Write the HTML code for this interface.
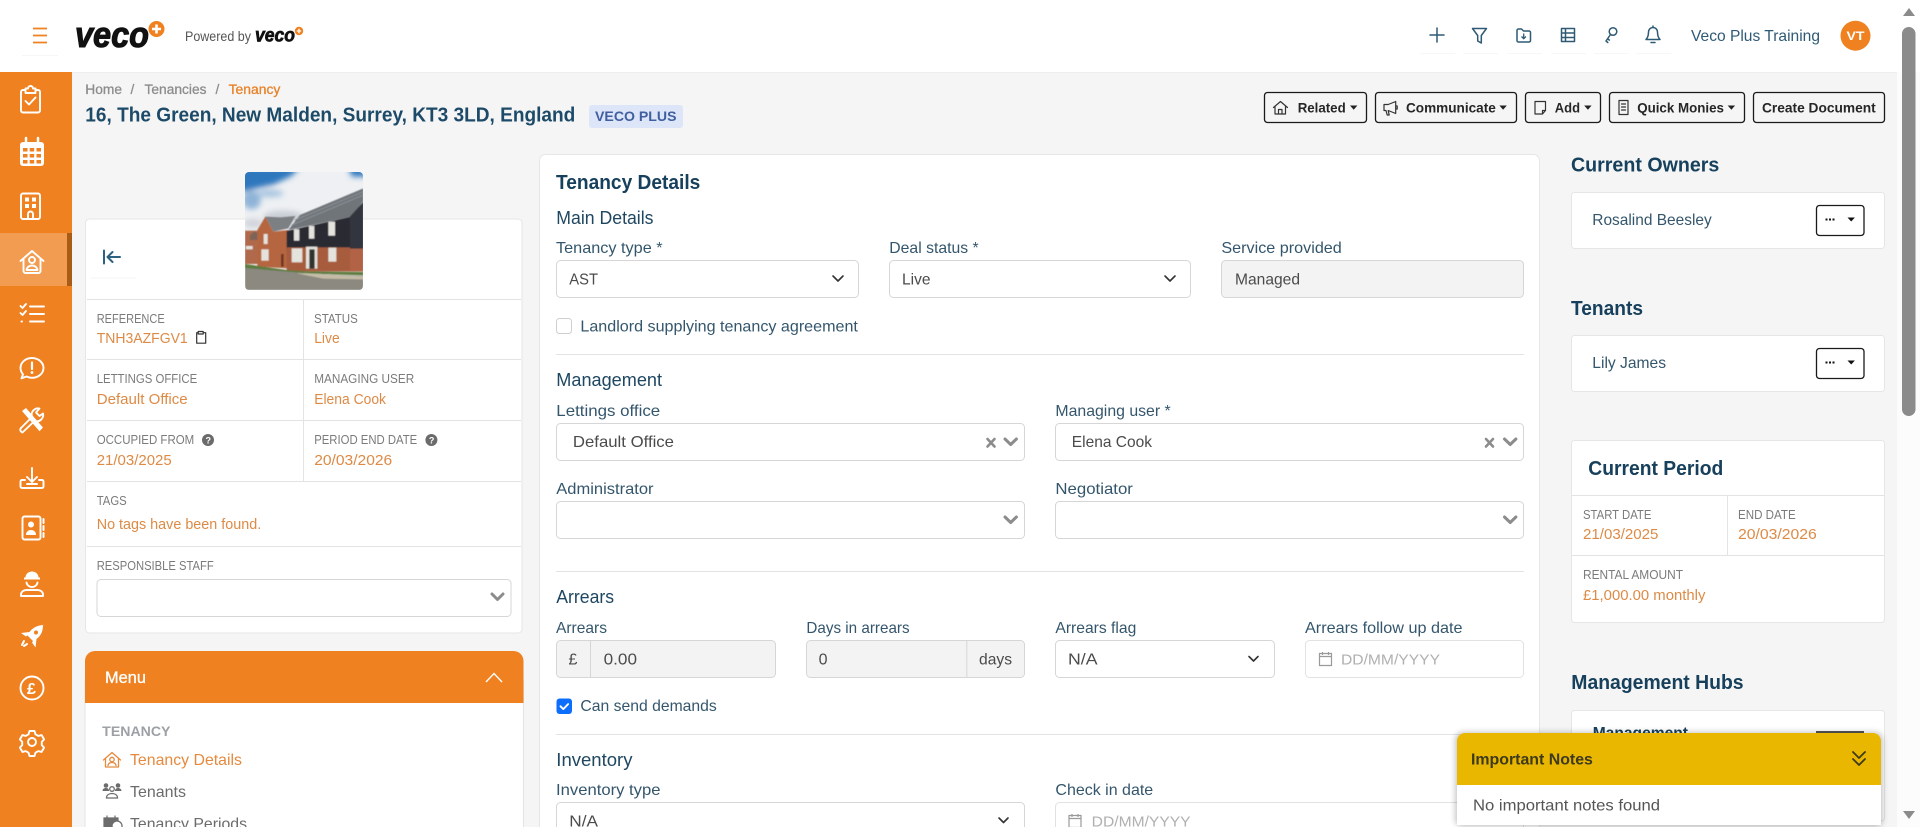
<!DOCTYPE html>
<html lang="en">
<head>
<meta charset="utf-8">
<title>Tenancy - Veco Plus</title>
<style>
html,body{margin:0;padding:0;width:1920px;height:827px;overflow:hidden;background:#fff}
svg{display:block}
text{font-family:"Liberation Sans",Arial,sans-serif}
.lb{font-size:12.5px;fill:#7b7b7b}
.v{font-size:14.5px;fill:#dd8a45}
.f{font-size:16px;fill:#34566c}
.in{font-size:16px;fill:#4b4b4b}
.ph{font-size:15px;fill:#b0b0b0}
.h2{font-size:18.5px;fill:#1f4761}
.h1{font-size:20px;font-weight:700;fill:#17405c}
.bt{font-size:14px;font-weight:700;fill:#262626}
.box{fill:#fff;stroke:#d6d6d6;stroke-width:1}
.card{fill:#fff;stroke:#e6e6e6;stroke-width:1}
.ln{stroke:#e3e3e3;stroke-width:1}
.btn{fill:none;stroke:#1a1a1a;stroke-width:1.3}
.s{fill:none;stroke:#fff;stroke-width:1.9;stroke-linecap:round;stroke-linejoin:round}
.t{fill:none;stroke:#2f5a75;stroke-width:1.5;stroke-linecap:round;stroke-linejoin:round}
.k{fill:none;stroke:#333;stroke-width:1.2;stroke-linecap:round;stroke-linejoin:round}
.ch{fill:none;stroke:#333;stroke-width:1.6;stroke-linecap:round;stroke-linejoin:round}
.cg{fill:none;stroke:#8c8c8c;stroke-width:3;stroke-linecap:round;stroke-linejoin:round}
.cx{fill:none;stroke:#8c8c8c;stroke-width:2.6;stroke-linecap:round}
</style>
</head>
<body>
<svg width="1920" height="827" viewBox="0 0 1920 827" xmlns="http://www.w3.org/2000/svg">
<defs>
<clipPath id="ph"><rect x="245" y="172" width="118" height="118" rx="4"/></clipPath>
<filter id="sh" x="-5%" y="-10%" width="110%" height="125%"><feGaussianBlur stdDeviation="3"/></filter>
<filter id="bl" x="-20%" y="-20%" width="140%" height="140%"><feGaussianBlur stdDeviation="9"/></filter>
<filter id="soft" x="-5%" y="-5%" width="110%" height="110%"><feGaussianBlur stdDeviation="1.5"/></filter>
</defs>

<!-- page backgrounds -->
<rect x="0" y="0" width="1920" height="827" fill="#fff"/>
<rect x="72" y="72" width="1825" height="755" fill="#f5f5f5"/>
<rect x="72" y="72" width="1825" height="1" fill="#eeeeee"/>
<rect x="1897" y="72" width="23" height="755" fill="#fcfcfc"/>

<!-- header -->
<rect x="22" y="55" width="36" height="1" fill="#f6f6f6"/>
<path d="M33 28.500h14M33 35.500h14M33 42.500h14" stroke="#ef8120" stroke-width="1.700" fill="none"/>
<text x="75" y="47" font-size="36" font-weight="700" font-style="italic" fill="#111" stroke="#111" stroke-width="1.100" textLength="74" lengthAdjust="spacingAndGlyphs">veco</text>
<circle cx="156.500" cy="29" r="8" fill="#ef8120"/>
<path d="M152 29h9M156.500 24.500v9" stroke="#fff" stroke-width="2.600"/>
<text x="185" y="41" font-size="13.500" fill="#555" textLength="66" lengthAdjust="spacingAndGlyphs">Powered by</text>
<text x="255" y="41.500" font-size="19" font-weight="700" font-style="italic" fill="#111" stroke="#111" stroke-width=".7" textLength="40" lengthAdjust="spacingAndGlyphs">veco</text>
<circle cx="299" cy="31" r="4.200" fill="#ef8120"/>
<path d="M296.800 31h4.400M299 28.800v4.400" stroke="#fff" stroke-width="1.300"/>

<!-- header tool icons -->
<g fill="#f7f7f7">
<rect x="1420" y="53" width="35" height="1"/><rect x="1463" y="53" width="35" height="1"/><rect x="1507" y="53" width="35" height="1"/><rect x="1551" y="53" width="35" height="1"/><rect x="1594" y="53" width="35" height="1"/><rect x="1636" y="53" width="35" height="1"/>
</g>
<path class="t" d="M1437 28v14M1430 35h14"/>
<path class="t" d="M1472.500 28.500h14l-5.200 7v7.500l-3.600-2v-5.500z"/>
<path class="t" d="M1517 30v10.500a1.500 1.500 0 0 0 1.500 1.500h10.500a1.500 1.500 0 0 0 1.500-1.500v-8a1.500 1.500 0 0 0-1.500-1.500h-5.500l-2-2h-3a1.500 1.500 0 0 0-1.500 1.500z"/>
<path d="M1523.700 33.500v5M1521.500 36.500l2.200 2.200 2.200-2.200" fill="none" stroke="#2f5a75" stroke-width="1.300"/>
<path class="t" d="M1561.500 28.500h13v13h-13zM1561.500 33h13M1561.500 37.500h13M1565.500 28.500v13"/>
<circle class="t" cx="1613" cy="31.500" r="3.800"/>
<path class="t" d="M1610.500 34.500l-4.500 6.500 1.800 1.500M1607.700 38.800l1.700 1.300"/>
<path class="t" d="M1653 27.500a4.500 4.500 0 0 1 4.500 4.500c0 4 1 6 2.500 7.500h-14c1.500-1.500 2.500-3.500 2.500-7.500a4.500 4.500 0 0 1 4.500-4.500zM1651 42.500h4M1653 26v1.500"/>
<text x="1691" y="41" font-size="16" fill="#2f5a75" textLength="129" lengthAdjust="spacingAndGlyphs">Veco Plus Training</text>
<circle cx="1855.500" cy="35.700" r="15" fill="#ef8120"/>
<text x="1846.500" y="39.800" font-size="11.500" font-weight="700" fill="#fff" textLength="18" lengthAdjust="spacingAndGlyphs">VT</text>

<!-- sidebar -->
<rect x="0" y="72" width="72" height="755" fill="#ef8120"/>
<rect x="0" y="233" width="72" height="53" fill="#f19c50"/>
<rect x="67" y="233" width="5" height="53" fill="#a85c16"/>
<!-- clipboard -->
<path class="s" d="M25.500 90h-2.500a2 2 0 0 0-2 2v18.500a2 2 0 0 0 2 2h15a2 2 0 0 0 2-2V92a2 2 0 0 0-2-2h-2.500M25.500 88.500h2.500a2.500 2.500 0 0 1 5 0h2.500v4.500h-10zM25.500 101l3.500 3.500 6.500-7"/>
<!-- calendar -->
<rect x="20" y="142" width="24" height="24" rx="3" fill="#fff"/>
<path d="M26 138v6M38 138v6" stroke="#fff" stroke-width="2.500" stroke-linecap="round"/>
<g fill="#ef8120"><rect x="23" y="148" width="4.500" height="3.500"/><rect x="29.700" y="148" width="4.500" height="3.500"/><rect x="36.500" y="148" width="4.500" height="3.500"/><rect x="23" y="154" width="4.500" height="3.500"/><rect x="29.700" y="154" width="4.500" height="3.500"/><rect x="36.500" y="154" width="4.500" height="3.500"/><rect x="23" y="160" width="4.500" height="3.500"/><rect x="29.700" y="160" width="4.500" height="3.500"/><rect x="36.500" y="160" width="4.500" height="3.500"/></g>
<!-- building -->
<rect class="s" x="21" y="193.500" width="19" height="25.500" rx="2"/>
<g fill="#fff"><rect x="25" y="197.500" width="4" height="4"/><rect x="32" y="197.500" width="4" height="4"/><rect x="25" y="204" width="4" height="4"/><rect x="32" y="204" width="4" height="4"/></g>
<path class="s" d="M28 219v-5a2.500 2.500 0 0 1 5 0v5"/>
<!-- home user -->
<path class="s" d="M20.500 261l11.500-10 11.500 10M23.500 259v12a2 2 0 0 0 2 2h13a2 2 0 0 0 2-2v-12"/>
<circle cx="32" cy="260" r="3" fill="none" stroke="#fff" stroke-width="1.900"/>
<path class="s" d="M26.500 270c.5-3 3-4.500 5.500-4.500s5 1.500 5.500 4.500z"/>
<!-- list check -->
<path class="s" d="M20.500 306l2 2 3.500-4M20.500 313l2 2 3.500-4M21.500 321.500h.5M30 306.500h14M30 314h14M30 321.500h14"/>
<!-- chat -->
<path class="s" d="M32 358c-6.500 0-11.500 4.600-11.500 10 0 2.500 1 4.500 2.500 6.300l-1.500 4 5-1.800c1.700.8 3.500 1.300 5.500 1.300 6.500 0 11.500-4.500 11.500-9.800s-5-10-11.500-10z"/>
<path d="M32 362.500v6.500" stroke="#fff" stroke-width="2.200" stroke-linecap="round"/><circle cx="32" cy="372.500" r="1.400" fill="#fff"/>
<!-- tools -->
<path d="M22 411l4-3 17 19.500-3.500 3.800z" fill="#fff"/>
<path class="s" d="M43 413.500a6.500 6.500 0 0 1-8.500 7.500l-12 11.500a3 3 0 0 1-2-4l11.500-11.500a6.500 6.500 0 0 1 7.500-8.500l-3.500 4 3.500 3.500z" stroke-width="2.100"/>
<!-- download -->
<path class="s" d="M32 468v14M27 477l5 5 5-5M25 480h-3a1.500 1.500 0 0 0-1.500 1.500v5a1.500 1.500 0 0 0 1.500 1.500h20a1.500 1.500 0 0 0 1.500-1.500v-5a1.500 1.500 0 0 0-1.500-1.500h-3M27 484h10" />
<!-- contact book -->
<rect class="s" x="22.500" y="516.500" width="18" height="23" rx="2"/>
<circle cx="31" cy="524.500" r="3" fill="#fff"/><path d="M26 535c0-3.500 2.500-5 5-5s5 1.500 5 5z" fill="#fff"/>
<path d="M43.500 519v4M43.500 526v4M43.500 533v4" stroke="#fff" stroke-width="2" stroke-linecap="round"/>
<!-- worker -->
<path d="M25.500 577.500c0-3.500 2.700-6 6.500-6s6.500 2.500 6.500 6h1.500v2h-16v-2z" fill="#fff"/>
<path class="s" d="M26.500 582.500c.5 3 3 4.500 5.500 4.500s5-1.500 5.500-4.500"/>
<path class="s" d="M21 594.500c0-3 3-4.500 5.500-4.500h11c2.500 0 5.500 1.500 5.500 4.500v1.500h-22z"/>
<!-- rocket -->
<path d="M43.500 625c-6.500.5-10.500 2.500-14 7l-8.500 1 5 3.500 1.500-1 5.500 5.500-1 1.500 3.500 5 1-8.500c4.500-3.500 6.500-7.500 6.500-14.500z" fill="#fff"/>
<circle cx="36" cy="632.500" r="2" fill="#ef8120"/>
<path d="M24 641l-2 4M27 644l-3 2" stroke="#fff" stroke-width="2" stroke-linecap="round"/>
<!-- pound -->
<circle class="s" cx="32" cy="688" r="11.500"/>
<text x="27" y="694" font-size="16" font-weight="700" fill="#fff">£</text>
<!-- gear -->
<path class="s" d="M29.500 731l5 0 1 3.300 2.800 1.600 3.300-.8 2.500 4.300-2.300 2.500v3.200l2.300 2.500-2.500 4.300-3.300-.8-2.800 1.600-1 3.300h-5l-1-3.300-2.800-1.600-3.300.8-2.500-4.300 2.300-2.500v-3.200l-2.300-2.500 2.500-4.300 3.300.8 2.800-1.600z"/>
<circle class="s" cx="32" cy="742" r="4"/>

<!-- breadcrumb and title -->
<g font-size="13.500" fill="#8d8d8d" stroke="#8d8d8d" stroke-width=".3">
<text x="85.300" y="94" textLength="36.700" lengthAdjust="spacingAndGlyphs">Home</text>
<text x="130.500" y="94">/</text>
<text x="144.500" y="94" textLength="62" lengthAdjust="spacingAndGlyphs">Tenancies</text>
<text x="215.500" y="94">/</text>
<text x="228.600" y="94" textLength="51.800" lengthAdjust="spacingAndGlyphs" fill="#e8842c" stroke="#e8842c">Tenancy</text>
</g>
<text x="85.300" y="121.500" font-size="20" font-weight="700" fill="#1c4a68" textLength="490" lengthAdjust="spacingAndGlyphs">16, The Green, New Malden, Surrey, KT3 3LD, England</text>
<rect x="589" y="105" width="94" height="23" rx="3" fill="#dde6f8"/>
<text x="595" y="121" font-size="14" font-weight="700" fill="#3f5f9f" textLength="81.500" lengthAdjust="spacingAndGlyphs">VECO PLUS</text>

<!-- action buttons -->
<rect class="btn" x="1264.500" y="92.500" width="102" height="30" rx="3"/>
<rect class="btn" x="1375.500" y="92.500" width="141" height="30" rx="3"/>
<rect class="btn" x="1525.500" y="92.500" width="75" height="30" rx="3"/>
<rect class="btn" x="1609.500" y="92.500" width="135" height="30" rx="3"/>
<rect class="btn" x="1753.500" y="92.500" width="131" height="30" rx="3"/>
<text class="bt" x="1297.700" y="112.300" textLength="48" lengthAdjust="spacingAndGlyphs">Related</text>
<text class="bt" x="1406" y="112.300" textLength="89.800" lengthAdjust="spacingAndGlyphs">Communicate</text>
<text class="bt" x="1554.800" y="112.300" textLength="25.200" lengthAdjust="spacingAndGlyphs">Add</text>
<text class="bt" x="1637.200" y="112.300" textLength="86.800" lengthAdjust="spacingAndGlyphs">Quick Monies</text>
<text class="bt" x="1762" y="112.300" textLength="113.700" lengthAdjust="spacingAndGlyphs">Create Document</text>
<g fill="#222">
<path d="M1350 105.500h7.400l-3.700 4.200z"/><path d="M1499.400 105.500h7.400l-3.700 4.200z"/><path d="M1584.200 105.500h7.400l-3.700 4.200z"/><path d="M1727.700 105.500h7.400l-3.700 4.200z"/>
</g>
<path class="k" d="M1273.500 107.500l7-6 7 6M1275 106.500v7.500h10.500v-7.500M1278.500 114v-4.500h3.500v4.500"/>
<path class="k" d="M1384 104.500v6h2l1.200 4.500h2l-1-4.500 7.500 3v-12l-7.500 3zM1395.700 106h1.500v3h-1.500"/>
<path class="k" d="M1535 101.500h10.500v9l-3 3.500h-7.500zM1545.500 110.500h-3v3.500"/>
<path class="k" d="M1619 100.500h9v14h-9zM1621.500 104h4M1621.500 107h4M1621.500 110h4"/>

<!-- left info card -->
<rect class="card" x="85.500" y="219" width="436.500" height="414" rx="4"/>
<path d="M104 250.500v13M120 257h-12M112.500 252l-5 5 5 5" fill="none" stroke="#2c6280" stroke-width="2" stroke-linecap="round" stroke-linejoin="round"/>
<path class="ln" d="M87 299.500h434M87 359.500h434M87 420.500h434M87 481.500h434M87 546.500h434M303.500 299.500v182"/>
<rect x="90" y="277.500" width="46" height="1" fill="#f5f5f5"/>
<g transform="translate(-.8,-.3)">
<text class="lb" x="97.500" y="323.300" textLength="68" lengthAdjust="spacingAndGlyphs">REFERENCE</text>
<text class="lb" x="314.800" y="323.300" textLength="43.800" lengthAdjust="spacingAndGlyphs">STATUS</text>
<text class="v" x="97.500" y="343.300" textLength="91" lengthAdjust="spacingAndGlyphs">TNH3AZFGV1</text>
<text class="v" x="315" y="343.300" textLength="25.500" lengthAdjust="spacingAndGlyphs">Live</text>
<path class="k" d="M199 333h-1.500v10.500h9v-10.500h-1.500M199 331.800h5v2.500h-5z" stroke-width="1.300"/>
<text class="lb" x="97.500" y="383.300" textLength="100.500" lengthAdjust="spacingAndGlyphs">LETTINGS OFFICE</text>
<text class="lb" x="315" y="383.300" textLength="100" lengthAdjust="spacingAndGlyphs">MANAGING USER</text>
<text class="v" x="97.500" y="404.300" textLength="91" lengthAdjust="spacingAndGlyphs">Default Office</text>
<text class="v" x="315" y="404.300" textLength="71.800" lengthAdjust="spacingAndGlyphs">Elena Cook</text>
<text class="lb" x="97.500" y="444.300" textLength="97.500" lengthAdjust="spacingAndGlyphs">OCCUPIED FROM</text>
<text class="lb" x="315" y="444.300" textLength="103" lengthAdjust="spacingAndGlyphs">PERIOD END DATE</text>
<text class="v" x="97.500" y="465.300" textLength="75" lengthAdjust="spacingAndGlyphs">21/03/2025</text>
<text class="v" x="315" y="465.300" textLength="78" lengthAdjust="spacingAndGlyphs">20/03/2026</text>
<text class="lb" x="97.500" y="505.300" textLength="30" lengthAdjust="spacingAndGlyphs">TAGS</text>
<text class="v" x="97.500" y="529.300" textLength="164.500" lengthAdjust="spacingAndGlyphs">No tags have been found.</text>
<text class="lb" x="97.500" y="570.300" textLength="117" lengthAdjust="spacingAndGlyphs">RESPONSIBLE STAFF</text>
</g>
<circle cx="208" cy="440" r="6" fill="#6b6b6b"/><text x="205.500" y="443.500" font-size="9" font-weight="700" fill="#fff">?</text>
<circle cx="431.400" cy="440" r="6" fill="#6b6b6b"/><text x="428.900" y="443.500" font-size="9" font-weight="700" fill="#fff">?</text>
<rect class="box" x="97" y="579.500" width="414" height="37" rx="4"/>
<path class="cg" d="M492 594l5.500 5.500 5.500-5.500"/>

<!-- property photo -->
<g clip-path="url(#ph)"><g transform="translate(220,160) scale(.33333)">
<rect x="60" y="20" width="385" height="385" fill="#eef0f3"/>
<g filter="url(#bl)">
<path d="M55 20h185l-25 28-55 26-45 10-60 14z" fill="#2f77bd"/>
<path d="M385 20h60v30h-50z" fill="#2f77bd"/>
<ellipse cx="95" cy="120" rx="28" ry="28" fill="#8fb4d8"/>
<ellipse cx="150" cy="100" rx="40" ry="12" fill="#a9c6e0"/>
<ellipse cx="190" cy="170" rx="60" ry="18" fill="#c9ced5"/>
<ellipse cx="100" cy="190" rx="30" ry="14" fill="#d0d4da"/>
</g>
<g filter="url(#soft)">
<rect x="75" y="212" width="40" height="100" fill="#b06a4b"/>
<path d="M90 226l14-12 10 6v20H90z" fill="#7d6458"/>
<path d="M112 320V210l24-40 24 45 45-5v115z" fill="#b5663f"/>
<path d="M136 170l45 2 45-4-21 37-45 10z" fill="#7d8083"/>
<path d="M205 210l35-45 190-80v40l-35 45z" fill="#70757a"/>
<path d="M215 195l215-90M225 180l205-85" stroke="#8a8f94" stroke-width="3" fill="none"/>
<path d="M395 170l35-45" stroke="#e8e8e8" stroke-width="3" fill="none"/>
<path d="M200 213l195-43 35-45v146H200z" fill="#2a2c33"/>
<path d="M200 262h230v72H200z" fill="#a75b3d"/>
<path d="M390 170l40-45v146h-40z" fill="#33363d"/>
<path d="M390 266h40v68h-40z" fill="#b26445"/>
<g fill="#e5e3de">
<rect x="222" y="208" width="16" height="34"/><rect x="267" y="198" width="16" height="38"/><rect x="325" y="185" width="20" height="42"/>
<rect x="215" y="265" width="32" height="42"/><rect x="325" y="263" width="24" height="42"/><rect x="124" y="268" width="22" height="34"/><rect x="131" y="222" width="12" height="30"/><rect x="258" y="260" width="34" height="66"/><rect x="78" y="258" width="20" height="10"/>
</g>
<rect x="268" y="268" width="16" height="58" fill="#30322f"/>
<rect x="183" y="282" width="8" height="38" fill="#6f3423"/>
<path d="M75 312l125 18 60 4 170 2v10l-170-6-185-14z" fill="#5f7d40"/>
<path d="M75 324l185 16 170 8v42H75z" fill="#8b8980"/>
<path d="M230 340h40l160 10v8l-120-2z" fill="#c4bca6"/>
</g>
</g></g>

<!-- menu card -->
<rect x="85" y="680" width="438.500" height="160" fill="#fff" stroke="#e4e4e4"/>
<path d="M85 703v-42a10 10 0 0 1 10-10h418.500a10 10 0 0 1 10 10v42z" fill="#ef8120"/>
<text x="105" y="683" font-size="17" fill="#fff" stroke="#fff" stroke-width=".3" textLength="41" lengthAdjust="spacingAndGlyphs">Menu</text>
<path d="M486 682l8-8.500 8 8.500" fill="none" stroke="#fff" stroke-width="1.400"/>
<text x="102.200" y="736" font-size="14" font-weight="700" fill="#9da1a6" textLength="68.300" lengthAdjust="spacingAndGlyphs">TENANCY</text>
<text x="130" y="764.800" font-size="16" fill="#e58a3f" textLength="112" lengthAdjust="spacingAndGlyphs">Tenancy Details</text>
<text x="130" y="797" font-size="16" fill="#6c6c6c" textLength="56" lengthAdjust="spacingAndGlyphs">Tenants</text>
<text x="130" y="829" font-size="16" fill="#6c6c6c" textLength="117" lengthAdjust="spacingAndGlyphs">Tenancy Periods</text>
<g fill="none" stroke="#e58a3f" stroke-width="1.300" stroke-linecap="round" stroke-linejoin="round">
<path d="M103.500 760l8.500-7.500 8.500 7.500M105.500 758.500v8.500h13v-8.500"/><circle cx="112" cy="759.500" r="2.200"/><path d="M108 765.500c.3-2 2-3 4-3s3.700 1 4 3"/>
</g>
<g fill="#6c6c6c">
<circle cx="106" cy="785.500" r="2.300"/><circle cx="118" cy="785.500" r="2.300"/><path d="M102.500 791c0-2 1.500-3 3.500-3s3 1 3 3z"/><path d="M115 791c0-2 1.500-3 3-3s3.500 1 3.500 3z"/>
</g>
<g fill="none" stroke="#6c6c6c" stroke-width="1.300"><circle cx="112" cy="789" r="2.300"/><path d="M106.500 798c0-3 2.500-4.500 5.500-4.500s5.500 1.500 5.500 4.500z"/></g>
<path d="M104 818h14v9h-14zM107 815.500v3M115 815.500v3" fill="#6c6c6c" stroke="#6c6c6c" stroke-width="1.200"/>
<circle cx="117" cy="826" r="5" fill="#fff" stroke="#6c6c6c" stroke-width="1.300"/>

<!-- main form card -->
<rect class="card" x="539.500" y="154.500" width="1000" height="690" rx="6"/>
<text class="h1" x="556" y="189" textLength="144.300" lengthAdjust="spacingAndGlyphs">Tenancy Details</text>
<text class="h2" x="556.300" y="224" textLength="97.200" lengthAdjust="spacingAndGlyphs">Main Details</text>
<text class="f" x="556" y="253" textLength="106.600" lengthAdjust="spacingAndGlyphs">Tenancy type *</text>
<text class="f" x="889.300" y="253" textLength="89.300" lengthAdjust="spacingAndGlyphs">Deal status *</text>
<text class="f" x="1221.400" y="253" textLength="120.400" lengthAdjust="spacingAndGlyphs">Service provided</text>
<rect class="box" x="556.500" y="260.500" width="302" height="37" rx="4"/>
<rect class="box" x="889.500" y="260.500" width="301" height="37" rx="4"/>
<rect class="box" x="1221.500" y="260.500" width="302" height="37" rx="4" style="fill:#f3f3f3"/>
<text class="in" x="569.300" y="284.300" textLength="28.700" lengthAdjust="spacingAndGlyphs">AST</text>
<text class="in" x="902" y="284.300" textLength="28.500" lengthAdjust="spacingAndGlyphs">Live</text>
<text class="in" x="1235" y="284.300" textLength="65" lengthAdjust="spacingAndGlyphs">Managed</text>
<path class="ch" d="M833 276l5 5 5-5"/>
<path class="ch" d="M1165 276l5 5 5-5"/>
<rect x="556.500" y="318.500" width="15" height="15" rx="3" fill="#fff" stroke="#cfcfcf"/>
<text class="f" x="580.400" y="331.500" textLength="277.500" lengthAdjust="spacingAndGlyphs">Landlord supplying tenancy agreement</text>
<path class="ln" d="M556 354.500h968"/>

<text class="h2" x="556.300" y="386" textLength="105.700" lengthAdjust="spacingAndGlyphs">Management</text>
<text class="f" x="556.300" y="415.800" textLength="103.900" lengthAdjust="spacingAndGlyphs">Lettings office</text>
<text class="f" x="1055.400" y="415.800" textLength="115.300" lengthAdjust="spacingAndGlyphs">Managing user *</text>
<rect class="box" x="556.500" y="423.500" width="468" height="37" rx="4"/>
<rect class="box" x="1055.500" y="423.500" width="468" height="37" rx="4"/>
<text class="in" x="572.900" y="447" textLength="101.100" lengthAdjust="spacingAndGlyphs">Default Office</text>
<text class="in" x="1071.800" y="447" textLength="80.200" lengthAdjust="spacingAndGlyphs">Elena Cook</text>
<path class="cx" d="M987.500 439l7 7.500M994.500 439l-7 7.500"/>
<path class="cg" d="M1005 439l5.700 5.500 5.700-5.500"/>
<path class="cx" d="M1486 439l7 7.500M1493 439l-7 7.500"/>
<path class="cg" d="M1504.500 439l5.700 5.500 5.700-5.500"/>
<text class="f" x="556.300" y="494" textLength="97.200" lengthAdjust="spacingAndGlyphs">Administrator</text>
<text class="f" x="1055.400" y="494" textLength="77.500" lengthAdjust="spacingAndGlyphs">Negotiator</text>
<rect class="box" x="556.500" y="501.500" width="468" height="37" rx="4"/>
<rect class="box" x="1055.500" y="501.500" width="468" height="37" rx="4"/>
<path class="cg" d="M1005 517l5.700 5.500 5.700-5.500"/>
<path class="cg" d="M1504.500 517l5.700 5.500 5.700-5.500"/>
<path class="ln" d="M556 571.500h968"/>

<text class="h2" x="556.300" y="603" textLength="57.800" lengthAdjust="spacingAndGlyphs">Arrears</text>
<text class="f" x="556" y="633" textLength="51" lengthAdjust="spacingAndGlyphs">Arrears</text>
<text class="f" x="806.400" y="633" textLength="103.200" lengthAdjust="spacingAndGlyphs">Days in arrears</text>
<text class="f" x="1055.400" y="633" textLength="80.900" lengthAdjust="spacingAndGlyphs">Arrears flag</text>
<text class="f" x="1305" y="633" textLength="157.500" lengthAdjust="spacingAndGlyphs">Arrears follow up date</text>
<rect class="box" x="556.500" y="640.500" width="219" height="37" rx="4" style="fill:#f3f3f3"/>
<path d="M590.500 641v36" stroke="#d6d6d6"/>
<text class="in" x="568.500" y="664.300">£</text>
<text class="in" x="603.600" y="664.300" textLength="33.400" lengthAdjust="spacingAndGlyphs">0.00</text>
<rect class="box" x="806.500" y="640.500" width="218" height="37" rx="4" style="fill:#f3f3f3"/>
<path d="M966.800 641v36" stroke="#d6d6d6"/>
<text class="in" x="818.600" y="664.300">0</text>
<text class="in" x="979" y="664.300" textLength="33" lengthAdjust="spacingAndGlyphs">days</text>
<rect class="box" x="1055.500" y="640.500" width="219" height="37" rx="4"/>
<text class="in" x="1068" y="664.300" textLength="29.500" lengthAdjust="spacingAndGlyphs">N/A</text>
<path class="ch" d="M1249 656.500l4.500 4.500 4.500-4.500"/>
<rect class="box" x="1305.500" y="640.500" width="218" height="37" rx="4" style="stroke:#e2e2e2"/>
<path d="M1319.500 653.500h12v12h-12zM1319.500 656.500h12M1322.500 652v3M1328.500 652v3" fill="none" stroke="#9a9a9a" stroke-width="1.200"/>
<text class="ph" x="1341" y="664.300" textLength="99" lengthAdjust="spacingAndGlyphs">DD/MM/YYYY</text>
<rect x="556.500" y="698.500" width="15.500" height="15.500" rx="3" fill="#0d6efd"/>
<path d="M560.500 706.300l2.800 2.800 4.800-5" fill="none" stroke="#fff" stroke-width="1.900" stroke-linecap="round" stroke-linejoin="round"/>
<text class="f" x="580.400" y="711" textLength="136.400" lengthAdjust="spacingAndGlyphs">Can send demands</text>
<path class="ln" d="M556 734.500h968"/>

<text class="h2" x="556.300" y="766" textLength="76.200" lengthAdjust="spacingAndGlyphs">Inventory</text>
<text class="f" x="556" y="795" textLength="104.500" lengthAdjust="spacingAndGlyphs">Inventory type</text>
<text class="f" x="1055.400" y="795" textLength="97.800" lengthAdjust="spacingAndGlyphs">Check in date</text>
<rect class="box" x="556.500" y="802.500" width="468" height="37" rx="4"/>
<text class="in" x="569.300" y="826.700" textLength="28.700" lengthAdjust="spacingAndGlyphs">N/A</text>
<path class="ch" d="M999 818l4.500 4.500 4.500-4.500"/>
<rect class="box" x="1055.500" y="802.500" width="468" height="37" rx="4" style="stroke:#e2e2e2"/>
<path d="M1069 815.500h12v12h-12zM1069 818.500h12M1072 814v3M1078 814v3" fill="none" stroke="#9a9a9a" stroke-width="1.200"/>
<text class="ph" x="1091.700" y="826.500" textLength="98.900" lengthAdjust="spacingAndGlyphs">DD/MM/YYYY</text>

<!-- right column -->
<text class="h1" x="1571" y="171.500" textLength="148.300" lengthAdjust="spacingAndGlyphs">Current Owners</text>
<rect class="card" x="1571.500" y="192.500" width="313" height="56" rx="3"/>
<text class="f" x="1592.300" y="225" textLength="119.400" lengthAdjust="spacingAndGlyphs">Rosalind Beesley</text>
<rect class="btn" x="1816.500" y="205.500" width="47.500" height="30" rx="3"/>
<g fill="#111"><rect x="1825.500" y="218.500" width="2" height="2"/><rect x="1829" y="218.500" width="2" height="2"/><rect x="1832.500" y="218.500" width="2" height="2"/><path d="M1847.500 217.500h7.400l-3.700 4z"/></g>

<text class="h1" x="1571" y="315" textLength="72" lengthAdjust="spacingAndGlyphs">Tenants</text>
<rect class="card" x="1571.500" y="335.500" width="313" height="56" rx="3"/>
<text class="f" x="1592.300" y="368" textLength="73.700" lengthAdjust="spacingAndGlyphs">Lily James</text>
<rect class="btn" x="1816.500" y="348.500" width="47.500" height="30" rx="3"/>
<g fill="#111"><rect x="1825.500" y="361.500" width="2" height="2"/><rect x="1829" y="361.500" width="2" height="2"/><rect x="1832.500" y="361.500" width="2" height="2"/><path d="M1847.500 360.500h7.400l-3.700 4z"/></g>

<rect class="card" x="1571.500" y="440.500" width="313" height="182" rx="3"/>
<text class="h1" x="1588.300" y="475" textLength="135" lengthAdjust="spacingAndGlyphs">Current Period</text>
<path class="ln" d="M1572 495.500h312M1572 555.500h312M1727.500 495.500v60"/>
<text class="lb" x="1583" y="519" textLength="68.400" lengthAdjust="spacingAndGlyphs">START DATE</text>
<text class="lb" x="1738" y="519" textLength="57.700" lengthAdjust="spacingAndGlyphs">END DATE</text>
<text class="v" x="1583" y="539" textLength="75.400" lengthAdjust="spacingAndGlyphs">21/03/2025</text>
<text class="v" x="1738" y="539" textLength="78.700" lengthAdjust="spacingAndGlyphs">20/03/2026</text>
<text class="lb" x="1583" y="579" textLength="100" lengthAdjust="spacingAndGlyphs">RENTAL AMOUNT</text>
<text class="v" x="1583" y="600" textLength="122.400" lengthAdjust="spacingAndGlyphs">£1,000.00 monthly</text>

<text class="h1" x="1571.300" y="688.800" textLength="172.300" lengthAdjust="spacingAndGlyphs">Management Hubs</text>
<rect class="card" x="1571.500" y="710.500" width="313" height="110" rx="3"/>
<text x="1592.700" y="738" font-size="16" font-weight="700" fill="#17405c" textLength="95.300" lengthAdjust="spacingAndGlyphs">Management</text>
<rect x="1816" y="731" width="48" height="2" fill="#555"/>

<!-- important notes -->
<rect x="1455" y="732" width="428" height="95" rx="8" fill="#000" opacity=".22" filter="url(#sh)"/>
<path d="M1457 825v-84a8 8 0 0 1 8-8h408a8 8 0 0 1 8 8v84z" fill="#fff"/>
<path d="M1457 785v-44a8 8 0 0 1 8-8h408a8 8 0 0 1 8 8v44z" fill="#e9b600"/>
<text x="1471" y="764.300" font-size="15.500" font-weight="700" fill="#3d3a1e" textLength="121.900" lengthAdjust="spacingAndGlyphs">Important Notes</text>
<path d="M1853 752l6 6 6-6M1853 759l6 6 6-6" fill="none" stroke="#3d3a1e" stroke-width="1.800" stroke-linecap="round" stroke-linejoin="round"/>
<text x="1473" y="810.300" font-size="16" fill="#555" textLength="187" lengthAdjust="spacingAndGlyphs">No important notes found</text>

<!-- scrollbar -->
<rect x="1902" y="27" width="13.500" height="389" rx="6.700" fill="#8b8b8b"/>
<path d="M1909 8l6 8h-12z" fill="#8b8b8b"/>
<path d="M1909 819l-6-8h12z" fill="#8b8b8b"/>
</svg>
</body>
</html>
